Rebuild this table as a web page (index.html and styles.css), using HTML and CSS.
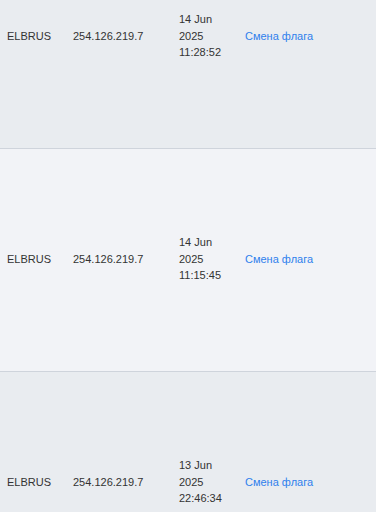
FILE: index.html
```html
<!DOCTYPE html>
<html>
<head>
<meta charset="utf-8">
<link rel="stylesheet" href="styles.css">
</head>
<body>
<div class="list">
  <div class="row odd">
    <div class="cell">ELBRUS</div>
    <div class="cell">254.126.219.7</div>
    <div class="cell date">14 Jun 2025 11:28:52</div>
    <div class="cell"><a class="link" href="#">Смена флага</a></div>
  </div>
  <div class="row even">
    <div class="cell">ELBRUS</div>
    <div class="cell">254.126.219.7</div>
    <div class="cell date">14 Jun 2025 11:15:45</div>
    <div class="cell"><a class="link" href="#">Смена флага</a></div>
  </div>
  <div class="row odd">
    <div class="cell">ELBRUS</div>
    <div class="cell">254.126.219.7</div>
    <div class="cell date">13 Jun 2025 22:46:34</div>
    <div class="cell"><a class="link" href="#">Смена флага</a></div>
  </div>
</div>
</body>
</html>
```
FILE: styles.css
```css
html, body {
  margin: 0;
  padding: 0;
  background: #e9ecf0;
  overflow: hidden;
}
body {
  font-family: "Liberation Sans", Arial, sans-serif;
  font-size: 11px;
  line-height: 16.5px;
  color: #333333;
}
.list {
  margin-top: -74px;
}
.row {
  display: grid;
  grid-template-columns: 66px 106px 66px 1fr;
  align-items: center;
  height: 222px;
  border-bottom: 1px solid #cfd4dc;
}
.odd {
  background: #e9ecf0;
}
.even {
  background: #f2f3f7;
}
.cell {
  padding: 0 7px 2px;
}
.link {
  color: #2f80ed;
  text-decoration: none;
}
```
